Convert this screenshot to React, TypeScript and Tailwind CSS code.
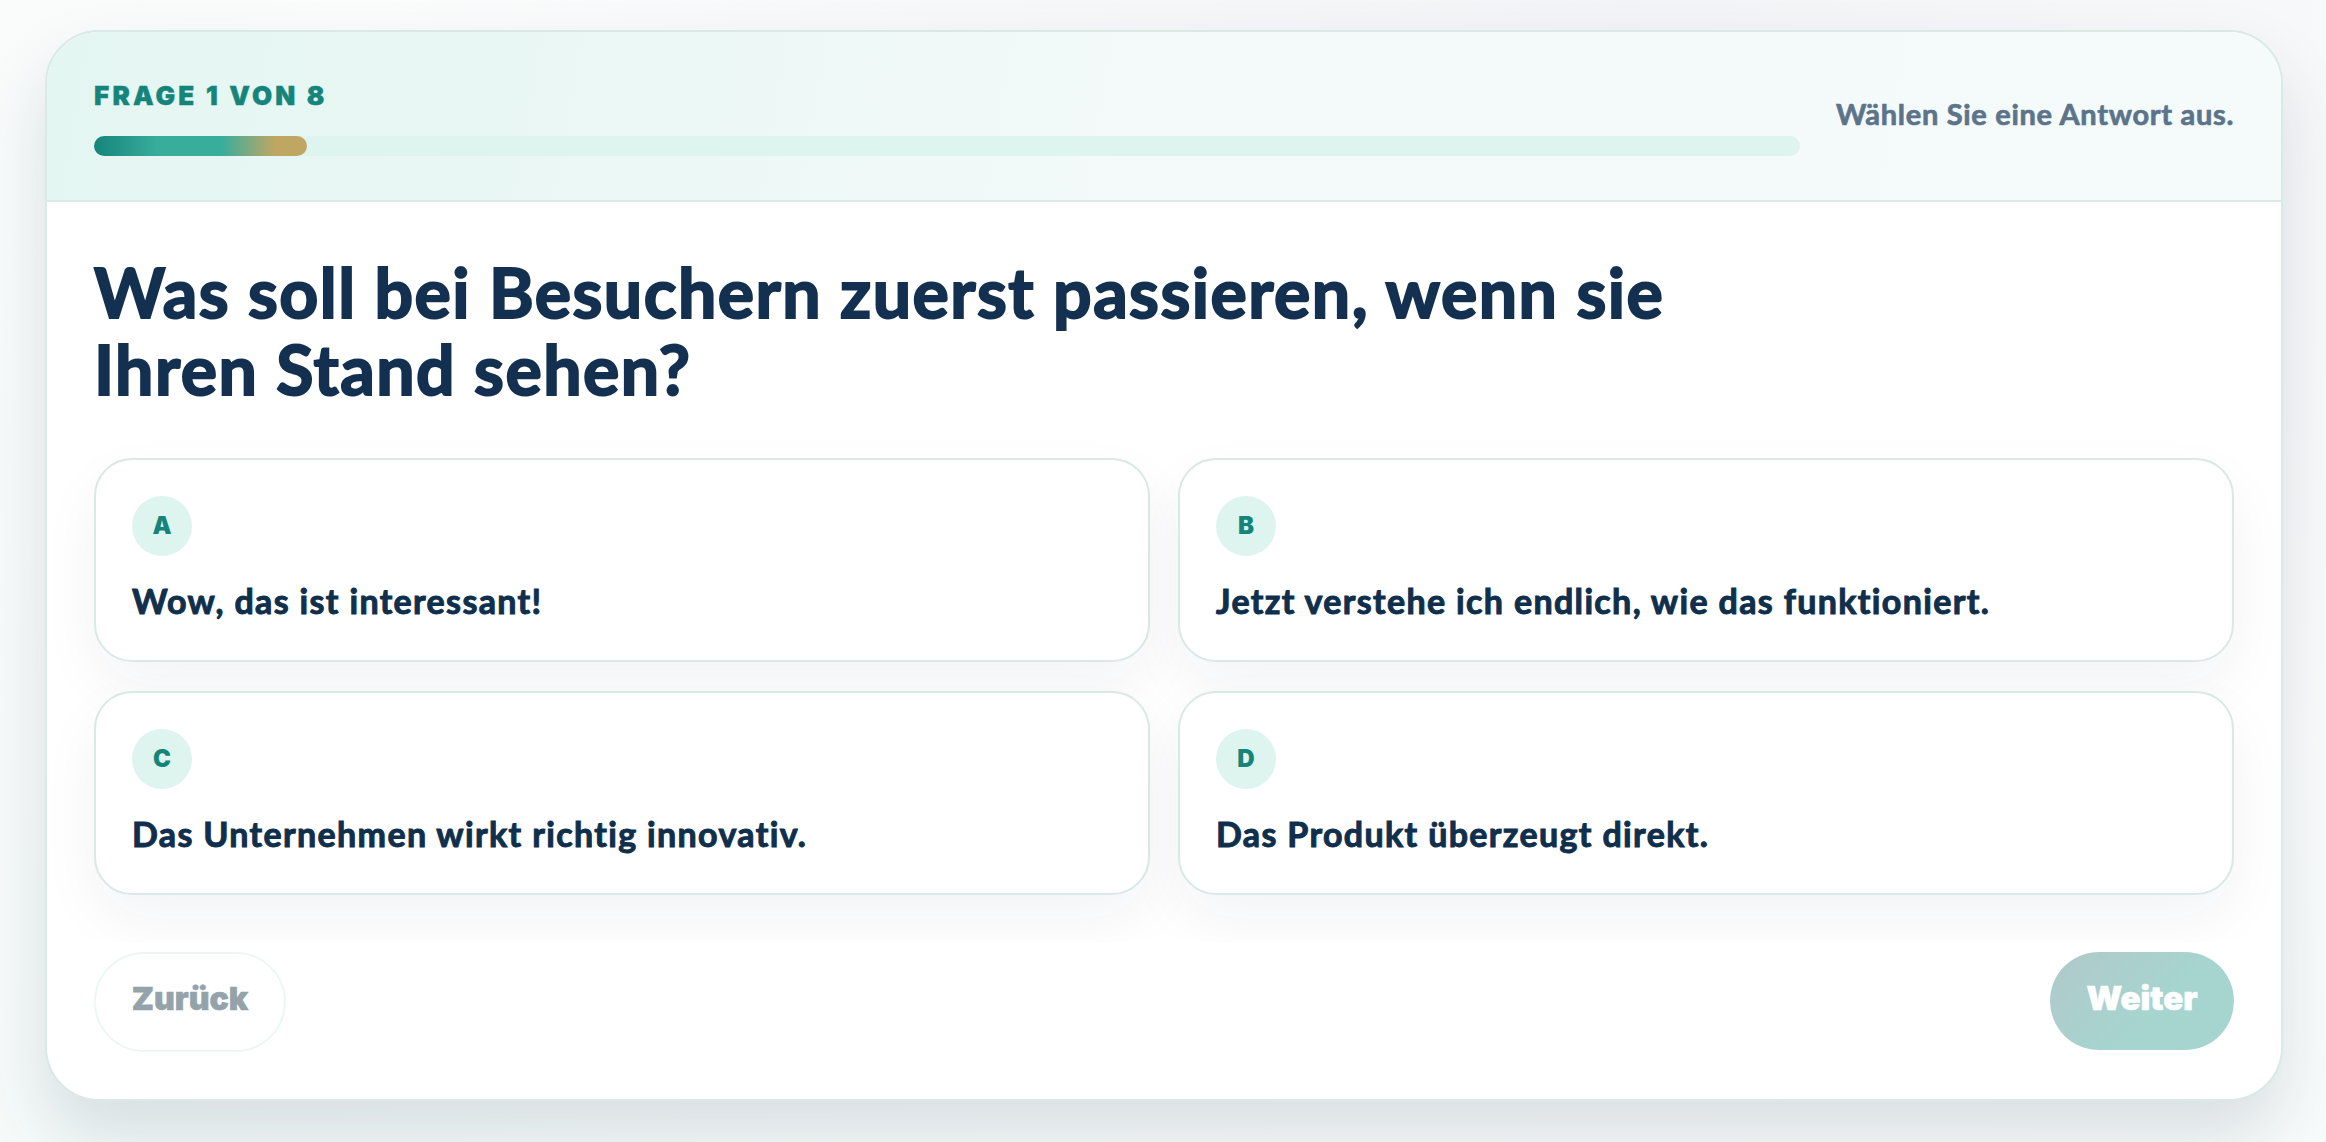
import React from 'react';

const answers = [
  { key: 'A', text: 'Wow, das ist interessant!' },
  { key: 'B', text: 'Jetzt verstehe ich endlich, wie das funktioniert.' },
  { key: 'C', text: 'Das Unternehmen wirkt richtig innovativ.' },
  { key: 'D', text: 'Das Produkt überzeugt direkt.' },
];

function App() {
  return (
    <div className="h-[1142px] w-full overflow-hidden bg-[radial-gradient(ellipse_at_70%_0%,#f3f4f7_0%,#fbfcfc_55%,#f6fbfa_100%)] pt-[30px] pl-[45px] pr-[43px] font-[Lato,sans-serif]">
      <div className="h-[1071px] overflow-hidden rounded-[54px] border-2 border-[#d9e9e5] bg-white shadow-[0_36px_70px_rgba(20,48,77,0.14)]">
        {/* --- HEADER --- */}
        <div className="flex h-[170px] items-center gap-[36px] border-b-2 border-[#d9e9e5] bg-[linear-gradient(100deg,#e4f6f2_0%,#e9f7f4_20%,#f3faf9_48%,#f5fafb_100%)] pl-[47px] pr-[47px]">
          <div className="flex-1 pt-[3px]">
            <div className="font-[Inter,sans-serif] text-[26px] leading-[32px] font-black tracking-[3.2px] text-[#15857b] [-webkit-text-stroke:0.4px_#15857b]">FRAGE 1 VON 8</div>
            <div className="mt-[24px] h-[20px] w-full rounded-full bg-[#def4ee]">
              <div className="h-full w-[12.5%] rounded-full bg-[linear-gradient(90deg,#15857b_0%,#39ad9c_30%,#39ad9c_60%,#c0a663_85%)]"></div>
            </div>
          </div>
          <div className="pb-[4px] text-[29px] font-bold tracking-[0.7px] text-[#5c748a] [-webkit-text-stroke:0.7px_#5c748a]">Wählen Sie eine Antwort aus.</div>
        </div>

        {/* --- QUESTION --- */}
        <div className="px-[47px] pt-[51px]">
          <h1 className="max-w-[1650px] text-[68px] leading-[77px] font-bold tracking-[1.45px] text-[#143050] [-webkit-text-stroke:2px_#143050]">
            Was soll bei Besuchern zuerst passieren, wenn sie Ihren Stand sehen?
          </h1>

          <div className="mt-[51px] grid grid-cols-2 gap-x-[28px] gap-y-[29px]">
            {answers.map((a) => (
              <div
                key={a.key}
                className="h-[204px] rounded-[38px] border-2 border-[#d9e9e5] bg-white px-[36px] pt-[36px] shadow-[0_24px_60px_rgba(20,48,77,0.05)]"
              >
                <div className="flex h-[60px] w-[60px] items-center justify-center rounded-full bg-[#def4ee] font-[Inter,sans-serif] text-[24px] font-black text-[#15857b]">
                  {a.key}
                </div>
                <div className="mt-[23px] text-[34px] leading-[44px] font-bold tracking-[1.35px] text-[#0f2f4c] [-webkit-text-stroke:1px_#0f2f4c]">{a.text}</div>
              </div>
            ))}
          </div>
        </div>

        {/* --- FOOTER --- */}
        <div className="relative mt-[47px] flex items-start justify-between bg-white px-[47px] pt-[10px] font-[Inter,sans-serif]">
          <button className="h-[100px] w-[192px] rounded-full border-2 border-[#eef6f4] bg-white pb-[6px] text-[32px] font-black text-[#94a3aa] [-webkit-text-stroke:0.6px_#94a3aa]">
            Zurück
          </button>
          <button className="h-[98px] w-[184px] rounded-full bg-[linear-gradient(135deg,#b0c9ca_0%,#a6d5d0_60%)] pb-[4px] text-[33px] font-black text-white [-webkit-text-stroke:0.6px_#ffffff]">
            Weiter
          </button>
        </div>
      </div>
    </div>
  );
}

export default App;
